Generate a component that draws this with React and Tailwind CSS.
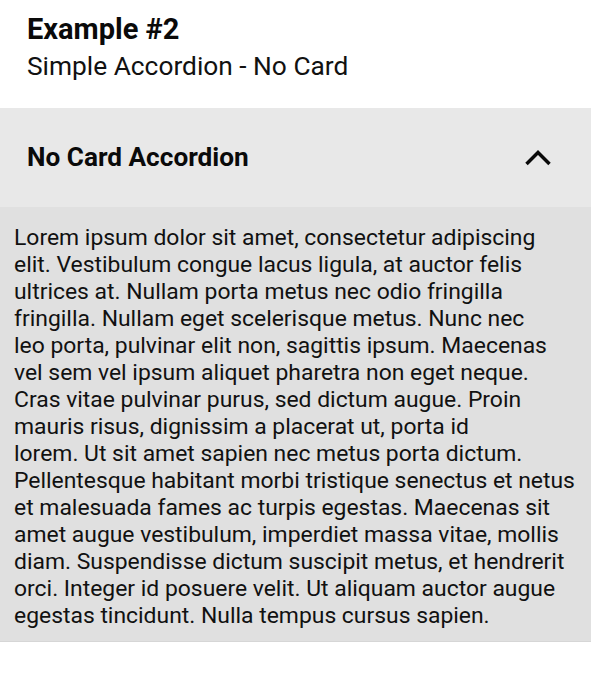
import React, { useState } from 'react';

const lines = [
  'Lorem ipsum dolor sit amet, consectetur adipiscing',
  'elit. Vestibulum congue lacus ligula, at auctor felis',
  'ultrices at. Nullam porta metus nec odio fringilla',
  'fringilla. Nullam eget scelerisque metus. Nunc nec',
  'leo porta, pulvinar elit non, sagittis ipsum. Maecenas',
  'vel sem vel ipsum aliquet pharetra non eget neque.',
  'Cras vitae pulvinar purus, sed dictum augue. Proin',
  'mauris risus, dignissim a placerat ut, porta id',
  'lorem. Ut sit amet sapien nec metus porta dictum.',
  'Pellentesque habitant morbi tristique senectus et netus',
  'et malesuada fames ac turpis egestas. Maecenas sit',
  'amet augue vestibulum, imperdiet massa vitae, mollis',
  'diam. Suspendisse dictum suscipit metus, et hendrerit',
  'orci. Integer id posuere velit. Ut aliquam auctor augue',
  'egestas tincidunt. Nulla tempus cursus sapien.',
];

const ChevronUp = ({ className }) => (
  <svg viewBox="0 0 30 20" className={className} fill="none" stroke="currentColor" strokeWidth="3.5" strokeLinejoin="miter">
    <path d="M3.5 16L15 4.5 26.5 16" />
  </svg>
);

export default function App() {
  const [open, setOpen] = useState(true);

  return (
    <div className="min-h-[679px] bg-white text-black font-['Roboto',sans-serif]">
      <div className="pl-[27px] pt-[12px] pb-[25px]">
        <h2 className="text-[29px] font-bold leading-[34px] text-[#0a0a0a]">Example #2</h2>
        <p className="mt-[3px] text-[26.3px] leading-[34px] text-[#111]">Simple Accordion - No Card</p>
      </div>

      <button
        onClick={() => setOpen(!open)}
        className="w-full h-[99px] bg-[#e8e8e8] flex items-center justify-between pl-[27px] pr-[38px] text-[#0a0a0a]"
      >
        <span className="text-[26.2px] font-bold">No Card Accordion</span>
        <ChevronUp className={`w-[30px] h-[20px] ${open ? '' : 'rotate-180'}`} />
      </button>

      {open && (
        <div className="bg-[#e0e0e0] border-b border-[#d6d6d6] px-[14px] pt-[17px] pb-[12px]">
          {lines.map((line) => (
            <p key={line} className="text-[22.9px] leading-[27px] text-[#111] whitespace-nowrap">
              {line}
            </p>
          ))}
        </div>
      )}
    </div>
  );
}
